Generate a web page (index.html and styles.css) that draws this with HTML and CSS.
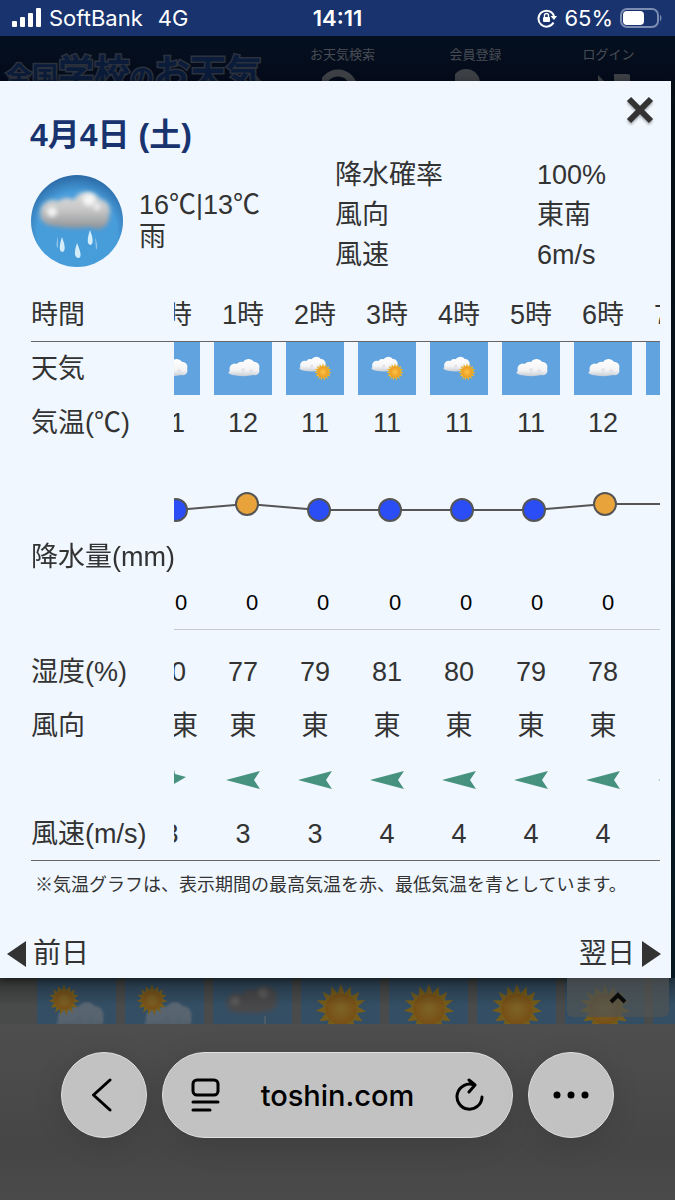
FILE: index.html
```html
<!DOCTYPE html>
<html lang="ja">
<head>
    <meta charset="UTF-8">
    <meta name="viewport" content="width=device-width, initial-scale=1.0">
    <title>全国学校のお天気</title>
    <link rel="stylesheet" href="styles.css">
</head>
<body>
    <!-- Shared weather icons -->
    <svg class="defs" width="0" height="0" aria-hidden="true">
        <defs>
            <linearGradient id="white" gradientUnits="userSpaceOnUse" x1="0" y1="2" x2="0" y2="21">
                <stop offset="0" stop-color="#fff"/>
                <stop offset="0.6" stop-color="#f4f4f6"/>
                <stop offset="1" stop-color="#c0c6d0"/>
            </linearGradient>
            <linearGradient id="grey" gradientUnits="userSpaceOnUse" x1="0" y1="16" x2="0" y2="54">
                <stop offset="0" stop-color="#e0e0e0"/>
                <stop offset="0.5" stop-color="#c6c6c6"/>
                <stop offset="1" stop-color="#8f9296"/>
            </linearGradient>
            <radialGradient id="sunfill">
                <stop offset="0" stop-color="#f9c545"/>
                <stop offset="1" stop-color="#ee9a22"/>
            </radialGradient>
            <radialGradient id="disc" cx="50%" cy="62%" r="62%">
                <stop offset="0.7" stop-color="#479cda"/>
                <stop offset="1" stop-color="#2a69a5"/>
            </radialGradient>
            <filter id="soft" x="-20%" y="-20%" width="140%" height="140%">
                <feGaussianBlur stdDeviation="0.7"/>
            </filter>
            <filter id="softer" x="-20%" y="-20%" width="140%" height="140%">
                <feGaussianBlur stdDeviation="2"/>
            </filter>
            <symbol id="cloud" viewBox="0 0 36 22" overflow="visible">
                <g fill="url(#white)" filter="url(#soft)">
                    <ellipse cx="17" cy="16" rx="16" ry="4"/>
                    <circle cx="8" cy="12" r="6"/>
                    <circle cx="15" cy="10" r="6"/>
                    <circle cx="23" cy="8" r="7"/>
                    <circle cx="29" cy="10" r="6"/>
                    <circle cx="30" cy="14" r="5"/>
                    <circle cx="20" cy="14" r="5"/>
                </g>
                <g fill="#d5d9e0" filter="url(#soft)" opacity="0.6">
                    <circle cx="17" cy="13" r="2"/>
                    <circle cx="26" cy="14" r="2"/>
                </g>
            </symbol>
            <symbol id="sun" viewBox="-30 -30 60 60">
                <path fill="#eab52b" d="M0-29 4-18 11-26 12-15 21-20 18-10 28-10 19-3 29 3 18 5 25 14 14 13 17 24 8 17 5 29 0 18-7 28-8 17-17 24-14 13-25 14-18 5-29 2-19-3-28-10-17-10-21-20-12-15-11-26-4-18z"/>
                <circle r="18" fill="url(#sunfill)"/>
            </symbol>
            <symbol id="tile-cloud" viewBox="0 0 58 53">
                <rect width="58" height="53" fill="#60a3de"/>
                <use href="#cloud" x="12" y="16" width="36" height="20"/>
            </symbol>
            <symbol id="tile-cloud-sun" viewBox="0 0 58 53">
                <rect width="58" height="53" fill="#60a3de"/>
                <use href="#cloud" x="11" y="14" width="31" height="17"/>
                <use href="#sun" x="28" y="21" width="18" height="18"/>
            </symbol>
            <symbol id="arrow" viewBox="0 0 34 18">
                <path d="M0 9 34 0 28 9 34 18z" fill="#47917f"/>
            </symbol>
            <symbol id="arrow-northeast" viewBox="0 0 34 34">
                <path d="M1 32 19 2 21 11 32 14z" fill="#47917f"/>
            </symbol>
        </defs>
    </svg>

    <div class="status-bar">
        <div class="carrier">
            <svg width="30" height="20" viewBox="0 0 30 20" fill="#fff">
                <rect x="0" y="13" width="5" height="6" rx="1"/>
                <rect x="8" y="9" width="5" height="10" rx="1"/>
                <rect x="16" y="5" width="5" height="14" rx="1"/>
                <rect x="24" y="0" width="5" height="19" rx="1"/>
            </svg>
            <span>SoftBank</span>
            <span class="network">4G</span>
        </div>
        <div class="clock">14:11</div>
        <div class="power">
            <svg width="20" height="20" viewBox="0 0 20 20" fill="none" stroke="#fff" stroke-width="2">
                <path d="M16.500 14.500A8 8 0 1 1 17 8"/>
                <path d="M13.500 8H20l-3 4z" fill="#fff" stroke="none"/>
                <rect x="6" y="9" width="7" height="5" rx="1" fill="#fff" stroke="none"/>
                <path d="M7.500 9V7.500a2 2 0 0 1 4 0V9" stroke-width="1.400"/>
            </svg>
            <span>65%</span>
            <svg width="43" height="20" viewBox="0 0 43 20">
                <rect x="1" y="1" width="37" height="18" rx="6" fill="none" stroke="#7c8cb3" stroke-width="2"/>
                <rect x="3" y="3" width="21" height="14" rx="4" fill="#fff"/>
                <path d="M40 6.500q3 3.500 0 7z" fill="#7c8cb3"/>
            </svg>
        </div>
    </div>

    <header class="site-header">
        <div class="logo"><span class="small">全国</span><span class="big">学校</span><span class="mid">の</span><span class="big">お天気</span></div>
        <a href="#" class="menu">お天気検索
            <svg width="42" height="42" viewBox="0 0 42 42"><circle cx="16" cy="20" r="16" fill="none" stroke="#3d4045" stroke-width="7"/></svg>
        </a>
        <a href="#" class="menu">会員登録
            <svg width="42" height="42" viewBox="0 0 42 42"><circle cx="11" cy="14" r="14" fill="#3d4045"/></svg>
        </a>
        <a href="#" class="menu">ログイン
            <svg width="42" height="42" viewBox="0 0 42 42"><path d="M10 6l14 14H10zM26 5h12q8 0 8 10v24H26z" fill="#3d4045"/></svg>
        </a>
    </header>

    <div class="popup-area">
        <main class="popup">
            <button class="close" aria-label="閉じる">
                <svg width="30" height="30" viewBox="0 0 30 30"><path d="M4 4 26 26M26 4 4 26" stroke="#333" stroke-width="6"/></svg>
            </button>
            <h1>4月4日 (土)</h1>

            <div class="summary">
                <div class="today">
                    <svg width="92" height="92" viewBox="0 0 92 92">
                        <circle cx="46" cy="46" r="46" fill="url(#disc)"/>
                        <g fill="url(#grey)" filter="url(#softer)">
                            <ellipse cx="44" cy="43" rx="34" ry="10"/>
                            <circle cx="22" cy="38" r="13"/>
                            <circle cx="36" cy="36" r="13"/>
                            <circle cx="56" cy="32" r="15"/>
                            <circle cx="67" cy="36" r="12"/>
                            <circle cx="66" cy="42" r="12"/>
                            <circle cx="46" cy="42" r="11"/>
                        </g>
                        <g fill="#fff" filter="url(#softer)" opacity="0.8">
                            <circle cx="21" cy="37" r="5"/>
                            <circle cx="58" cy="25" r="6"/>
                            <circle cx="66" cy="32" r="3"/>
                        </g>
                        <g fill="#d4edfb">
                            <path d="M31 62q5 13 1 15-6 0-1-15z"/>
                            <path d="M46 68q6 14 2 15-7 0-2-15z"/>
                            <path d="M59 55q5 13 1 15-6 0-1-15z"/>
                            <path d="M27 61q-3 11 0 12zM64 62q4 11 1 13z" opacity="0.5"/>
                        </g>
                    </svg>
                    <p>16℃|13℃<br>雨</p>
                </div>
                <dl class="details">
                    <dt>降水確率</dt><dd>100%</dd>
                    <dt>風向</dt><dd>東南</dd>
                    <dt>風速</dt><dd>6m/s</dd>
                </dl>
            </div>

            <div class="scroller" id="scroller">
                <table>
                    <thead>
                        <tr><th scope="row">時間</th><td>0時</td><td>1時</td><td>2時</td><td>3時</td><td>4時</td><td>5時</td><td>6時</td><td>7時</td></tr>
                    </thead>
                    <tbody>
                        <tr class="icons">
                            <th scope="row">天気</th>
                            <td><svg class="tile"><use href="#tile-cloud"/></svg></td>
                            <td><svg class="tile"><use href="#tile-cloud"/></svg></td>
                            <td><svg class="tile"><use href="#tile-cloud-sun"/></svg></td>
                            <td><svg class="tile"><use href="#tile-cloud-sun"/></svg></td>
                            <td><svg class="tile"><use href="#tile-cloud-sun"/></svg></td>
                            <td><svg class="tile"><use href="#tile-cloud"/></svg></td>
                            <td><svg class="tile"><use href="#tile-cloud"/></svg></td>
                            <td><svg class="tile"><use href="#tile-cloud"/></svg></td>
                        </tr>
                        <tr><th scope="row">気温(℃)</th><td>11</td><td>12</td><td>11</td><td>11</td><td>11</td><td>11</td><td>12</td><td>12</td></tr>
                        <!-- Temperature graph -->
                        <tr class="graph">
                            <th></th>
                            <td colspan="8">
                                <svg width="576" height="80" viewBox="0 0 576 80" stroke="#555" stroke-width="2">
                                    <polyline fill="none" points="41,60 112,54 184,60 255,60 327,60 399,60 470,54 542,54"/>
                                    <g fill="#2a4df5">
                                        <circle cx="41" cy="60" r="11"/>
                                        <circle cx="184" cy="60" r="11"/>
                                        <circle cx="255" cy="60" r="11"/>
                                        <circle cx="327" cy="60" r="11"/>
                                        <circle cx="399" cy="60" r="11"/>
                                    </g>
                                    <g fill="#e8a33a">
                                        <circle cx="112" cy="54" r="11"/>
                                        <circle cx="470" cy="54" r="11"/>
                                        <circle cx="542" cy="54" r="11"/>
                                    </g>
                                </svg>
                            </td>
                        </tr>
                        <tr><th scope="row">降水量(mm)</th><td colspan="8"></td></tr>
                        <!-- Rainfall graph -->
                        <tr class="rain">
                            <th></th>
                            <td colspan="8">
                                <svg width="576" height="61" viewBox="0 0 576 61">
                                    <g class="rain-value">
                                        <text x="46" y="26">0</text>
                                        <text x="117" y="26">0</text>
                                        <text x="188" y="26">0</text>
                                        <text x="260" y="26">0</text>
                                        <text x="331" y="26">0</text>
                                        <text x="402" y="26">0</text>
                                        <text x="473" y="26">0</text>
                                    </g>
                                    <rect y="45" width="576" height="1" fill="#c5cad3"/>
                                </svg>
                            </td>
                        </tr>
                        <tr><th scope="row">湿度(%)</th><td>80</td><td>77</td><td>79</td><td>81</td><td>80</td><td>79</td><td>78</td><td>78</td></tr>
                        <tr><th scope="row">風向</th><td>北東</td><td>東</td><td>東</td><td>東</td><td>東</td><td>東</td><td>東</td><td>東</td></tr>
                        <tr>
                            <th></th>
                            <td><svg class="wind diagonal"><use href="#arrow-northeast"/></svg></td>
                            <td><svg class="wind"><use href="#arrow"/></svg></td>
                            <td><svg class="wind"><use href="#arrow"/></svg></td>
                            <td><svg class="wind"><use href="#arrow"/></svg></td>
                            <td><svg class="wind"><use href="#arrow"/></svg></td>
                            <td><svg class="wind"><use href="#arrow"/></svg></td>
                            <td><svg class="wind"><use href="#arrow"/></svg></td>
                            <td><svg class="wind"><use href="#arrow"/></svg></td>
                        </tr>
                        <tr class="last"><th scope="row">風速(m/s)</th><td>3</td><td>3</td><td>3</td><td>4</td><td>4</td><td>4</td><td>4</td><td>4</td></tr>
                    </tbody>
                </table>
            </div>
            <p class="note">※気温グラフは、表示期間の最高気温を赤、最低気温を青としています。</p>

            <nav class="days">
                <a href="#"><svg width="19" height="26" viewBox="0 0 19 26"><path d="M0 13 19 0v26z" fill="#333"/></svg>前日</a>
                <a href="#">翌日<svg width="19" height="26" viewBox="0 0 19 26"><path d="M19 13 0 0v26z" fill="#333"/></svg></a>
            </nav>
        </main>
    </div>

    <!-- Dimmed weekly forecast behind the popup -->
    <div class="week">
        <svg class="day" viewBox="0 0 79 46"><use href="#cloud" x="18" y="22" width="50" height="32" opacity="0.5"/><use href="#sun" x="11" y="6" width="32" height="32"/></svg>
        <svg class="day" viewBox="0 0 79 46"><use href="#cloud" x="18" y="22" width="50" height="32" opacity="0.5"/><use href="#sun" x="11" y="6" width="32" height="32"/></svg>
        <svg class="day" viewBox="0 0 79 46"><g fill="#8c8c90" filter="url(#softer)"><ellipse cx="39" cy="27" rx="25" ry="8"/><circle cx="24" cy="25" r="10"/><circle cx="38" cy="20" r="9"/><circle cx="52" cy="20" r="12"/></g><g fill="#bbb" filter="url(#softer)"><circle cx="22" cy="23" r="4"/><circle cx="50" cy="15" r="5"/></g><path d="M52 38v8" stroke="#ccc"/></svg>
        <svg class="day" viewBox="0 0 79 46"><use href="#sun" x="14" y="5" width="52" height="52"/></svg>
        <svg class="day" viewBox="0 0 79 46"><use href="#sun" x="14" y="5" width="52" height="52"/></svg>
        <svg class="day" viewBox="0 0 79 46"><use href="#sun" x="14" y="5" width="52" height="52"/></svg>
        <svg class="day" viewBox="0 0 79 46"><use href="#sun" x="14" y="5" width="52" height="52"/></svg>
        <svg class="day" viewBox="0 0 79 46"></svg>
        <button class="to-top" aria-label="ページの先頭へ">
            <svg width="18" height="12" viewBox="0 0 18 12"><path d="M2 10 9 3l7 7" fill="none" stroke="#0b0b0b" stroke-width="4"/></svg>
        </button>
    </div>

    <div class="toolbar">
        <button class="round" aria-label="戻る">
            <svg width="24" height="34" viewBox="0 0 24 34" fill="none" stroke="#000" stroke-width="3" stroke-linecap="round" stroke-linejoin="round"><path d="M18 2 1.500 17 18 32"/></svg>
        </button>
        <div class="address">
            <button aria-label="ページメニュー">
                <svg width="29" height="34" viewBox="0 0 29 34" fill="none" stroke="#000" stroke-width="3" stroke-linecap="round"><rect x="2" y="2" width="25" height="15" rx="4"/><path d="M2 24h25M2 32h17"/></svg>
            </button>
            <span>toshin.com</span>
            <button aria-label="再読み込み">
                <svg width="29" height="34" viewBox="0 0 29 34" fill="none" stroke="#000" stroke-width="3" stroke-linecap="round" stroke-linejoin="round"><path d="M19 7A12.500 12.500 0 1 0 27 19M14 2l6 5-6 7"/></svg>
            </button>
        </div>
        <button class="round" aria-label="その他">
            <svg width="36" height="8" viewBox="0 0 36 8"><circle cx="4" cy="4" r="3.500"/><circle cx="18" cy="4" r="3.500"/><circle cx="32" cy="4" r="3.500"/></svg>
        </button>
    </div>

    <script>
        document.getElementById('scroller').scrollLeft = 39;
    </script>
</body>
</html>
```

FILE: styles.css
```css
* {
    box-sizing: border-box;
}
body {
    margin: 0;
    min-height: 100vh;
    display: flex;
    flex-direction: column;
    background-color: #4a4a4a;
    color: #333;
    font-family: "Liberation Sans", "Noto Sans CJK JP", sans-serif;
    font-size: 27px;
}
svg {
    display: block;
    flex-shrink: 0;
}
button {
    padding: 0;
    border: none;
    background: none;
    cursor: pointer;
}
a {
    color: inherit;
    text-decoration: none;
}
.defs {
    position: absolute;
}

/* Status bar */
.status-bar {
    height: 36px;
    padding: 0 12px;
    display: grid;
    grid-template-columns: 1fr auto 1fr;
    align-items: center;
    background-color: #18336e;
    color: #fff;
    font-family: Inter, sans-serif;
    font-size: 22px;
}
.carrier,
.power {
    display: flex;
    align-items: center;
    gap: 7px;
}
.power {
    justify-content: flex-end;
}
.network {
    margin-left: 8px;
}
.clock {
    font-weight: 600;
}

/* Site header */
.site-header {
    height: 45px;
    padding-left: 6px;
    display: flex;
    overflow: hidden;
    background: linear-gradient(#04101f, #050b1b);
    color: #484d55;
}
.logo {
    width: 270px;
    margin-top: 18px;
    line-height: 40px;
    white-space: nowrap;
    color: #0b1c3a;
    font-weight: bold;
    -webkit-text-stroke: 3px #2b323d;
    paint-order: stroke;
}
.logo .small {
    font-size: 26px;
}
.logo .mid {
    font-size: 24px;
}
.logo .big {
    font-size: 36px;
}
.menu {
    flex: 1;
    padding-top: 9px;
    display: flex;
    flex-direction: column;
    align-items: center;
    gap: 4px;
    font-size: 13px;
    line-height: 20px;
}

/* Popup */
.popup-area {
    padding-right: 4px;
    background: linear-gradient(#071018, #0b1d28);
}
.popup {
    position: relative;
    z-index: 1;
    padding: 34px 0 4px;
    background-color: #f0f7ff;
    box-shadow: 0 2px 8px rgba(0, 0, 0, 0.5);
}
.close {
    position: absolute;
    top: 14px;
    right: 16px;
    filter: drop-shadow(0 2px 1px rgba(0, 0, 0, 0.3));
}
h1 {
    margin: 0 30px;
    color: #18336e;
    font-size: 32px;
    line-height: 40px;
}
.summary {
    margin: 0 11px 13px 31px;
    display: flex;
    justify-content: space-between;
}
.today {
    height: 92px;
    margin-top: 20px;
    display: flex;
    align-items: center;
    gap: 16px;
}
.today p {
    margin: 0;
    line-height: 32px;
}
.details {
    width: 325px;
    margin: 0;
    display: grid;
    grid-template-columns: 202px 1fr;
    line-height: 40px;
}
.details dd {
    margin: 0;
}

/* Hourly table */
.scroller {
    margin: 0 11px 0 31px;
    overflow-x: auto;
    scrollbar-width: none;
}
table {
    width: 719px;
    table-layout: fixed;
    border-spacing: 0;
}
tr {
    height: 54px;
}
th,
td {
    width: 72px;
    padding: 0;
    text-align: center;
    line-height: 40px;
}
th {
    position: sticky;
    left: 0;
    z-index: 1;
    width: 143px;
    background-color: #f0f7ff;
    font-weight: normal;
    text-align: left;
    white-space: nowrap;
}
thead th,
thead td,
.last th,
.last td {
    border-bottom: 1px solid #666;
}
.icons td {
    vertical-align: top;
}
.tile {
    width: 58px;
    height: 53px;
    margin: 0 auto;
}
.graph {
    height: 80px;
}
.rain {
    height: 61px;
}
.rain-value {
    fill: #000;
    font-size: 22px;
    text-anchor: middle;
}
.wind {
    width: 34px;
    height: 18px;
    margin: 0 auto;
}
.diagonal {
    height: 34px;
}
.note {
    margin: 12px 11px 37px 35px;
    font-size: 18px;
    line-height: 24px;
}
.days {
    padding: 0 10px 0 7px;
    display: flex;
    justify-content: space-between;
    font-size: 28px;
    line-height: 40px;
}
.days a {
    display: flex;
    align-items: center;
    gap: 7px;
}

/* Weekly forecast */
.week {
    position: relative;
    height: 46px;
    padding-left: 37px;
    display: flex;
    gap: 9px;
    overflow: hidden;
    background-color: #8e9090;
}
.week::after {
    content: "";
    position: absolute;
    inset: 0;
    background: linear-gradient(rgba(10, 10, 10, 0.7), rgba(10, 10, 10, 0.52) 60%);
}
.day {
    width: 79px;
    height: 46px;
    background-color: #6198c6;
}
.to-top {
    position: absolute;
    right: 6px;
    bottom: 7px;
    z-index: 1;
    width: 102px;
    height: 46px;
    display: flex;
    justify-content: center;
    align-items: flex-end;
    padding-bottom: 13px;
    border-radius: 6px;
    background-color: rgba(80, 84, 82, 0.7);
}

/* Browser toolbar */
.toolbar {
    flex: 1;
    padding: 28px 61px 61px;
    display: flex;
    align-items: flex-start;
    gap: 15px;
    background: linear-gradient(#4e4e4e, #464646 70%, #4a4a4a);
}
.round,
.address {
    height: 86px;
    display: flex;
    align-items: center;
    border: 1px solid #e0e0e0;
    border-radius: 43px;
    background-color: #c2c2c2;
    box-shadow: 0 6px 30px rgba(0, 0, 0, 0.12);
}
.round {
    width: 86px;
    flex-shrink: 0;
    justify-content: center;
}
.address {
    flex: 1;
    justify-content: space-between;
    padding: 0 28px;
    color: #000;
    font-family: Inter, sans-serif;
    font-size: 29px;
    font-weight: 500;
}
```
